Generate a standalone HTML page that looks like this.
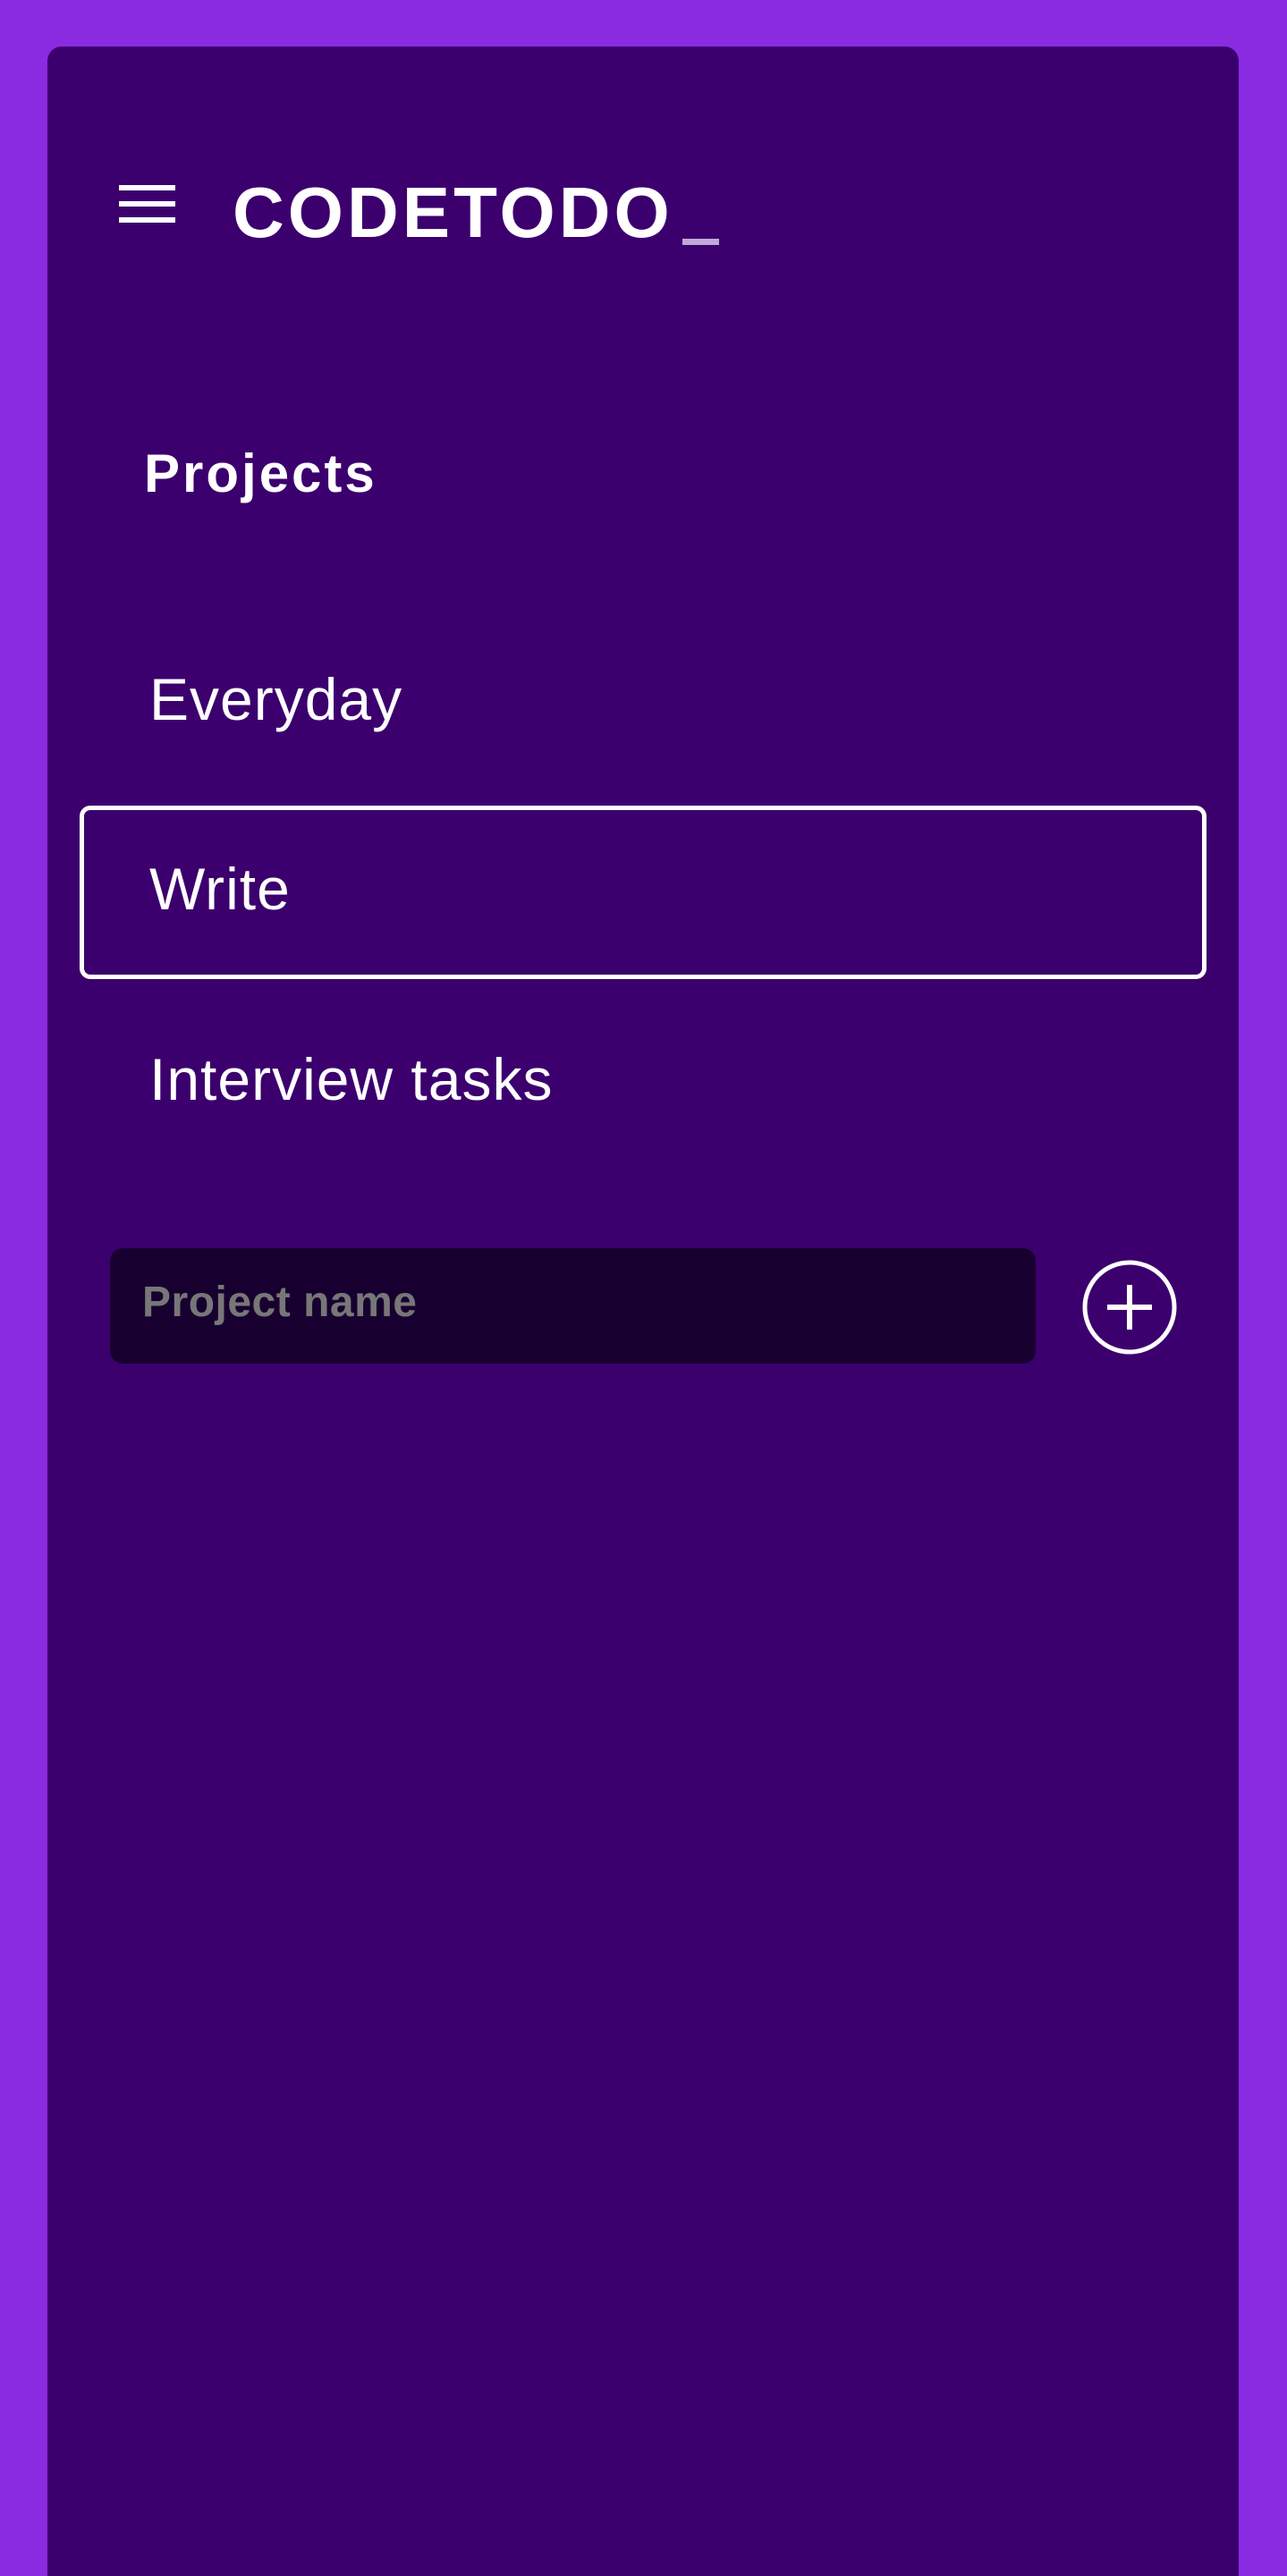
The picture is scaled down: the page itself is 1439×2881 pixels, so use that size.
<!DOCTYPE html>
<html><head><style>
html,body{margin:0;padding:0;}
body{width:1439px;height:2881px;background:#8a2be2;position:relative;overflow:hidden;font-family:"Liberation Sans",sans-serif;color:#fff;}
.panel{position:absolute;left:53px;top:52px;width:1332px;height:2829px;background:#3c006e;border-radius:16px 16px 0 0;}
.ham{position:absolute;left:133px;width:63px;height:6px;background:#fff;}
.logo{position:absolute;left:260px;top:196px;font-size:80px;font-weight:bold;letter-spacing:4px;line-height:84px;}
.us{position:absolute;left:763px;top:267px;width:41px;height:7px;background:#c0a8d8;}
.h{position:absolute;left:161px;top:497px;font-size:60px;font-weight:bold;line-height:66px;letter-spacing:3px;}
.item{position:absolute;left:167px;font-size:66px;line-height:74px;letter-spacing:1px;}
.box{position:absolute;left:89px;top:901px;width:1250px;height:184px;border:5px solid #fff;border-radius:12px;}
.input{position:absolute;left:123px;top:1396px;width:1035px;height:129px;background:#170030;border-radius:14px;}
.ph{position:absolute;left:159px;top:1430px;font-size:48px;font-weight:bold;color:#777;line-height:54px;letter-spacing:0.5px;}
</style></head><body>
<div class="panel"></div>
<div class="ham" style="top:207px"></div>
<div class="ham" style="top:225px"></div>
<div class="ham" style="top:243px"></div>
<div class="logo">CODETODO</div>
<div class="us"></div>
<div class="h">Projects</div>
<div class="item" style="top:745px">Everyday</div>
<div class="box"></div>
<div class="item" style="top:957px">Write</div>
<div class="item" style="top:1170px">Interview tasks</div>
<div class="input"></div>
<div class="ph">Project name</div>
<svg style="position:absolute;left:1208px;top:1407px" width="110" height="110" viewBox="0 0 110 110">
<circle cx="55" cy="55" r="50" fill="none" stroke="#fff" stroke-width="5"/>
<path d="M55 30V80M30 55H80" stroke="#fff" stroke-width="6"/>
</svg>
</body></html>
